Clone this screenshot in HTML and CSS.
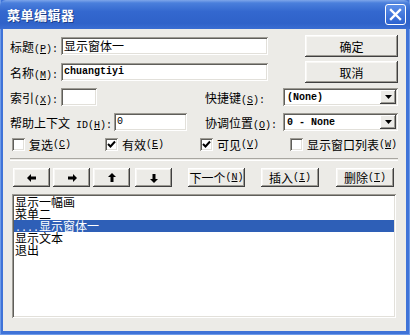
FILE: index.html
```html
<!DOCTYPE html>
<html lang="zh-CN">
<head>
    <meta charset="UTF-8">
    <title>菜单编辑器</title>
    <link rel="stylesheet" href="styles.css">
</head>
<body>
<div class="window">
    <div class="titlebar">
        <span class="title">菜单编辑器</span>
        <span class="close-btn">
            <svg width="13" height="13" viewBox="0 0 13 13"><path d="M2 2 L11 11 M11 2 L2 11" stroke="#fff" stroke-width="2.4" stroke-linecap="square"/></svg>
        </span>
    </div>
    <div class="client">
        <!-- caption / name rows with OK / Cancel -->
        <div class="row row-tall row-first">
            <span class="label lbl-short">标题<span class="key">(<u>P</u>):</span></span>
            <div class="field field-wide">显示窗体一</div>
            <div class="btn btn-side">确定</div>
        </div>
        <div class="row row-tall row-second">
            <span class="label lbl-short">名称<span class="key">(<u>M</u>):</span></span>
            <div class="field field-wide mono">chuangtiyi</div>
            <div class="btn btn-side">取消</div>
        </div>

        <div class="row row-field row-third">
            <div class="col-left">
                <span class="label lbl-short">索引<span class="key">(<u>X</u>):</span></span>
                <div class="field field-index"></div>
            </div>
            <span class="label-r">快捷键<span class="key">(<u>S</u>):</span></span>
            <div class="combo">
                <span class="combo-text mono">(None)</span>
                <span class="combo-arrow"><svg width="7" height="4" viewBox="0 0 7 4"><polygon points="0,0 7,0 3.5,4" fill="#000"/></svg></span>
            </div>
        </div>
        <div class="row row-field row-fourth">
            <div class="col-left">
                <span class="label lbl-long">帮助上下文<span class="key"> ID(<u>H</u>):</span></span>
                <div class="field field-help mono">0</div>
            </div>
            <span class="label-r">协调位置<span class="key">(<u>O</u>):</span></span>
            <div class="combo">
                <span class="combo-text mono">0 - None</span>
                <span class="combo-arrow"><svg width="7" height="4" viewBox="0 0 7 4"><polygon points="0,0 7,0 3.5,4" fill="#000"/></svg></span>
            </div>
        </div>

        <div class="row row-checks">
            <label class="check check-1"><span class="box"></span>复选<span class="key">(<u>C</u>)</span></label>
            <label class="check check-2"><span class="box"><svg width="9" height="9" viewBox="0 0 9 9"><polyline points="1,4 3.5,6.5 8,1.5" fill="none" stroke="#000" stroke-width="2"/></svg></span>有效<span class="key">(<u>E</u>)</span></label>
            <label class="check check-3"><span class="box"><svg width="9" height="9" viewBox="0 0 9 9"><polyline points="1,4 3.5,6.5 8,1.5" fill="none" stroke="#000" stroke-width="2"/></svg></span>可见<span class="key">(<u>V</u>)</span></label>
            <label class="check check-4"><span class="box"></span>显示窗口列表<span class="key">(<u>W</u>)</span></label>
        </div>

        <div class="separator"></div>

        <div class="row row-buttons">
            <div class="btn btn-arrow"><svg width="10" height="8" viewBox="0 0 10 8"><polygon points="0,4 4,0 4,2.5 9,2.5 9,5.5 4,5.5 4,8" fill="#000"/></svg></div>
            <div class="btn btn-arrow"><svg width="10" height="8" viewBox="0 0 10 8"><polygon points="10,4 6,0 6,2.5 1,2.5 1,5.5 6,5.5 6,8" fill="#000"/></svg></div>
            <div class="btn btn-arrow"><svg width="8" height="10" viewBox="0 0 8 10"><polygon points="4,0 8,4 5.5,4 5.5,9 2.5,9 2.5,4 0,4" fill="#000"/></svg></div>
            <div class="btn btn-arrow btn-arrow-last"><svg width="8" height="10" viewBox="0 0 8 10"><polygon points="4,10 8,6 5.5,6 5.5,1 2.5,1 2.5,6 0,6" fill="#000"/></svg></div>
            <div class="btn btn-next">下一个<span class="key">(<u>N</u>)</span></div>
            <div class="btn btn-insert">插入<span class="key">(<u>I</u>)</span></div>
            <div class="btn btn-delete">删除<span class="key">(<u>T</u>)</span></div>
        </div>

        <div class="listbox">
            <div class="item">显示一幅画</div>
            <div class="item">菜单二</div>
            <div class="item selected"><span class="dots">....</span>显示窗体一</div>
            <div class="item">显示文本</div>
            <div class="item">退出</div>
        </div>
    </div>
</div>
</body>
</html>
```

FILE: styles.css
```css
body {
    margin: 0;
    width: 410px;
    height: 335px;
    overflow: hidden;
    font-family: "Noto Sans CJK SC", "Noto Sans", sans-serif;
    font-size: 12px;
    color: #000;
}

/* window frame */
.window {
    width: 410px;
    height: 335px;
    display: flex;
    flex-direction: column;
    background: #3f73d8;
    box-shadow: inset 1px 0 #6f9be8, inset -1px 0 #6f9be8, inset 0 -1px #6f9be8;
}
.titlebar {
    height: 29px;
    flex: none;
    display: flex;
    align-items: center;
    justify-content: space-between;
    padding: 0 4px 0 7px;
    background: linear-gradient(to bottom, #7ea6ea 0, #4a7fdc 3px, #3468cf 40%, #2f62c9 80%, #3a6dd2 100%);
    border-radius: 6px 6px 0 0;
}
.title {
    color: #fff;
    font-weight: bold;
    font-size: 13px;
    letter-spacing: 0.5px;
    text-shadow: 1px 1px #1d3f8a;
}
.close-btn {
    width: 19px;
    height: 19px;
    border: 1px solid #fff;
    border-radius: 3px;
    display: flex;
    align-items: center;
    justify-content: center;
    background: linear-gradient(to bottom, #5d8fe8, #2c62d0);
}
.client {
    flex: 1;
    margin: 0 4px 4px 3px;
    background: #ecebe7;
    display: flex;
    flex-direction: column;
}

/* rows */
.row {
    display: flex;
    align-items: center;
    flex: none;
}
.row-tall {
    height: 22px;
}
.row-field {
    height: 18px;
}
.row-first { margin-top: 6px; }
.row-second { margin-top: 4px; }
.row-third { margin-top: 5px; }
.row-fourth { margin-top: 7px; }
.col-left {
    width: 202px;
    display: flex;
    align-items: center;
}

.label {
    margin-left: 7px;
    white-space: nowrap;
}
.lbl-short { width: 51px; }
.lbl-long { width: 104px; }
.label-r {
    width: 78px;
    white-space: nowrap;
}
.key {
    font-family: "Liberation Mono", monospace;
    font-size: 10px;
}
.mono {
    font-family: "Liberation Mono", monospace;
    font-size: 10px;
    font-weight: bold;
}

/* sunken text fields */
.field {
    height: 18px;
    box-sizing: border-box;
    padding-left: 3px;
    background: #fff;
    line-height: 18px;
    box-shadow: inset 1px 1px #9d9b94, inset -1px -1px #fff, inset 2px 2px #5f5e5a, inset -2px -2px #e2e0da;
    white-space: nowrap;
}
.field-wide { width: 207px; }
.field-index { width: 36px; }
.field-help { width: 73px; font-weight: normal; }

.combo {
    width: 115px;
    height: 18px;
    box-sizing: border-box;
    padding: 2px;
    background: #fff;
    display: flex;
    align-items: center;
    justify-content: space-between;
    box-shadow: inset 1px 1px #9d9b94, inset -1px -1px #fff, inset 2px 2px #5f5e5a, inset -2px -2px #e2e0da;
}
.combo-text {
    padding-left: 2px;
}
.combo-arrow {
    width: 16px;
    height: 14px;
    display: flex;
    align-items: center;
    justify-content: center;
    background: #ecebe7;
    box-shadow: inset -1px -1px #404040, inset 1px 1px #fff, inset -2px -2px #9d9b94;
}

/* raised buttons */
.btn {
    box-sizing: border-box;
    display: flex;
    align-items: center;
    justify-content: center;
    background: #ecebe7;
    box-shadow: inset -1px -1px #404040, inset 1px 1px #fff, inset -2px -2px #9d9b94, inset 2px 2px #f8f7f4;
    white-space: nowrap;
}
.btn-side {
    width: 93px;
    height: 22px;
    margin-left: auto;
    margin-right: 8px;
}

/* checkboxes */
.row-checks {
    margin-top: 7px;
    height: 13px;
}
.check {
    display: flex;
    align-items: center;
    white-space: nowrap;
}
.check-1 { width: 93px; margin-left: 9px; }
.check-2 { width: 95px; }
.check-3 { width: 90px; }
.box {
    width: 13px;
    height: 13px;
    box-sizing: border-box;
    margin-right: 4px;
    background: #fff;
    display: flex;
    align-items: center;
    justify-content: center;
    box-shadow: inset 1px 1px #9d9b94, inset -1px -1px #fff, inset 2px 2px #5f5e5a, inset -2px -2px #e2e0da;
}

.separator {
    margin: 7px 0 0 7px;
    width: 388px;
    height: 1px;
    border-top: 1px solid #a8a6a0;
    border-bottom: 1px solid #fff;
    flex: none;
}

/* editing buttons */
.row-buttons {
    margin-top: 7px;
    height: 19px;
    padding-left: 10px;
}
.row-buttons .btn {
    height: 19px;
}
.btn-arrow {
    width: 37px;
    margin-right: 3px;
}
.btn-arrow-last { margin-left: 2px; }
.btn-next { width: 57px; margin-left: 13px; }
.btn-insert { width: 58px; margin-left: 16px; }
.btn-delete { width: 58px; margin-left: 17px; }

/* menu list */
.listbox {
    margin: 7px 0 0 9px;
    width: 384px;
    height: 124px;
    box-sizing: border-box;
    padding: 2px 2px;
    background: #fff;
    flex: none;
    box-shadow: inset 1px 1px #9d9b94, inset -1px -1px #fff, inset 2px 2px #5f5e5a, inset -2px -2px #e2e0da;
}
.item {
    height: 12px;
    line-height: 12px;
    padding-left: 1px;
    white-space: nowrap;
}
.item.selected {
    background: #2e5fb7;
    color: #fff;
}
.dots {
    font-family: "Liberation Mono", monospace;
    font-size: 10px;
}
```
